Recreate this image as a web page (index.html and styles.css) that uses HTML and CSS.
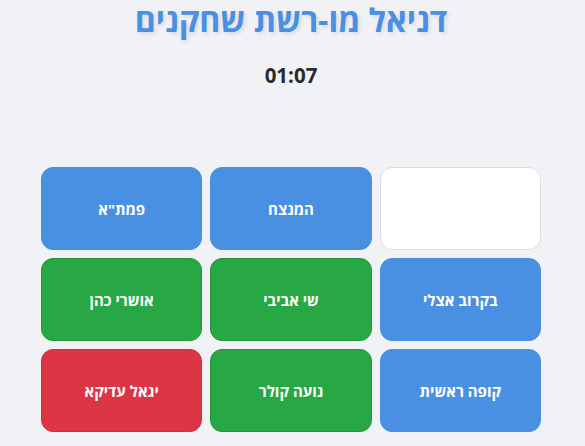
FILE: index.html
```html
<!DOCTYPE html>
<html lang="he" dir="rtl">
<head>
<meta charset="utf-8">
<title>מו-רשת שחקנים</title>
<link rel="stylesheet" href="styles.css">
</head>
<body>
<div class="page">
  <h1 class="title">דניאל מו-רשת שחקנים</h1>
  <div class="timer">01:07</div>
  <div class="board">
    <div class="cell empty"></div>
    <div class="cell blue">המנצח</div>
    <div class="cell blue">פמת"א</div>
    <div class="cell blue">בקרוב אצלי</div>
    <div class="cell green">שי אביבי</div>
    <div class="cell green">אושרי כהן</div>
    <div class="cell blue">קופה ראשית</div>
    <div class="cell green">נועה קולר</div>
    <div class="cell red">יגאל עדיקא</div>
  </div>
</div>
</body>
</html>
```

FILE: styles.css
```css
html, body {
  margin: 0;
  padding: 0;
}
body {
  background: #f0f2f5;
  font-family: "Open Sans", "Liberation Sans", sans-serif;
  color: #333;
}
.page {
  display: flex;
  flex-direction: column;
  align-items: center;
  padding: 2px 3px 0 0;
}
.title {
  margin: 0;
  font-size: 32px;
  font-weight: 700;
  line-height: 36px;
  color: #4a90e2;
  text-shadow: 2px 2px 4px rgba(0, 0, 0, 0.1);
}
.timer {
  margin-top: 22px;
  font-size: 20.5px;
  font-weight: 700;
  line-height: 30px;
  color: #2b2b2b;
}
.board {
  margin-top: 77px;
  width: 500px;
  display: grid;
  grid-template-columns: repeat(3, 1fr);
  grid-auto-rows: 83px;
  gap: 8px;
}
.cell {
  box-sizing: border-box;
  border-radius: 12px;
  display: flex;
  align-items: center;
  justify-content: center;
  color: #fff;
  font-size: 15px;
  font-weight: 700;
}
.empty {
  background: #fff;
  border: 1px solid #ddd;
}
.blue {
  background: #4a90e2;
  border: 1px solid #4a90e2;
}
.green {
  background: #28a745;
  border: 1px solid #23963d;
}
.red {
  background: #dc3545;
  border: 1px solid #d0303f;
}
```
